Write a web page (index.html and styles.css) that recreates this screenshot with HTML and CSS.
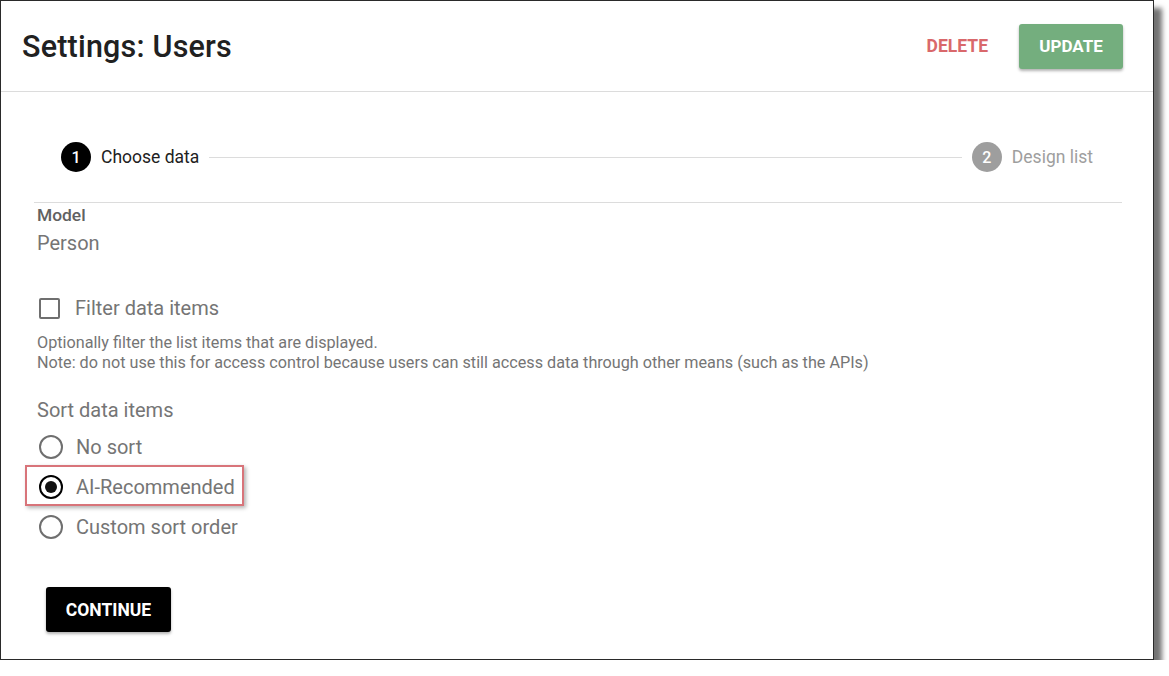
FILE: index.html
```html
<!DOCTYPE html>
<html lang="en">
<head>
<meta charset="UTF-8">
<meta name="viewport" content="width=device-width, initial-scale=1.0">
<title>Settings: Users</title>
<link rel="stylesheet" href="styles.css">
</head>
<body>

<div class="dialog">
  <div class="dialog-header">
    <h1 class="dialog-title">Settings: Users</h1>
    <div class="header-actions">
      <button class="btn-text delete-button">DELETE</button>
      <button class="btn update-button">UPDATE</button>
    </div>
  </div>

  <div class="dialog-body">
    <!-- stepper -->
    <div class="stepper">
      <div class="step active">
        <span class="step-num">1</span>
        <span class="step-label">Choose data</span>
      </div>
      <div class="step-line"></div>
      <div class="step">
        <span class="step-num">2</span>
        <span class="step-label">Design list</span>
      </div>
    </div>

    <div class="field">
      <div class="field-label">Model</div>
      <div class="field-value">Person</div>
    </div>

    <label class="option checkbox-option">
      <span class="checkbox"></span>
      <span class="option-label">Filter data items</span>
    </label>
    <div class="help-text">
      Optionally filter the list items that are displayed.<br>
      Note: do not use this for access control because users can still access data through other means (such as the APIs)
    </div>

    <div class="group-title">Sort data items</div>
    <div class="radio-group">
      <label class="option">
        <span class="radio"></span>
        <span class="option-label">No sort</span>
      </label>
      <label class="option highlight">
        <span class="radio checked"></span>
        <span class="option-label">AI-Recommended</span>
      </label>
      <label class="option">
        <span class="radio"></span>
        <span class="option-label">Custom sort order</span>
      </label>
    </div>

    <button class="btn continue-button">CONTINUE</button>
  </div>
</div>

</body>
</html>
```

FILE: styles.css
```css
body {
  margin: 0;
  font-family: 'Roboto', 'Liberation Sans', sans-serif;
  background-color: #fff;
}
.dialog {
  box-sizing: border-box;
  width: 1154px;
  height: 660px;
  background-color: #fff;
  border: 1px solid #2a2a2a;
  box-shadow: 8px 8px 5px rgba(0, 0, 0, 0.55);
}
.dialog-header {
  display: flex;
  align-items: center;
  justify-content: space-between;
  height: 90px;
  padding: 0 30px 0 21px;
  border-bottom: 1px solid #dcdcdc;
}
.dialog-title {
  margin: 0;
  font-size: 30.5px;
  font-weight: 500;
  color: #212121;
  letter-spacing: 0.2px;
}
.header-actions {
  display: flex;
  align-items: center;
  gap: 14px;
}
button {
  border: none;
  font-family: inherit;
  font-size: 17.5px;
  font-weight: 700;
  cursor: pointer;
}
.btn-text {
  background: none;
  padding: 0 17px;
  height: 45px;
}
.delete-button {
  color: #d9686b;
}
.btn {
  height: 45px;
  padding: 0;
  color: #fff;
  border-radius: 3px;
  box-shadow: 0 2px 3px rgba(0, 0, 0, 0.3);
}
.update-button {
  background-color: #74ae7e;
  width: 104px;
  font-size: 17px;
}
.dialog-body {
  padding: 20px 31px 0 33px;
}
.stepper {
  display: flex;
  align-items: center;
  height: 90px;
  padding: 0 29px 0 27px;
  border-bottom: 1px solid #dcdcdc;
}
.step {
  display: flex;
  align-items: center;
  gap: 10px;
  color: #9e9e9e;
  font-size: 17.5px;
}
.step-num {
  display: flex;
  align-items: center;
  justify-content: center;
  width: 30px;
  height: 30px;
  border-radius: 50%;
  background-color: #9e9e9e;
  color: #fff;
  font-size: 16px;
  font-weight: 500;
}
.step.active {
  color: #212121;
}
.step.active .step-num {
  background-color: #000;
}
.step-line {
  flex: 1;
  height: 1px;
  margin: 0 10px;
  background-color: #dcdcdc;
}
.field {
  padding: 0 0 0 3px;
}
.field-label {
  font-size: 17.4px;
  font-weight: 500;
  color: #616161;
  line-height: 24px;
}
.field-value {
  font-size: 20px;
  color: #757575;
  line-height: 32px;
}
.option {
  display: flex;
  align-items: center;
  gap: 13px;
  height: 40px;
  padding-left: 5px;
  color: #757575;
  font-size: 20px;
}
.checkbox-option {
  margin-top: 29px;
}
.checkbox {
  box-sizing: border-box;
  width: 21px;
  height: 21px;
  margin: 0 2px 0 0;
  border: 2px solid #6f6f6f;
  border-radius: 2px;
}
.help-text {
  margin: 5px 0 0 3px;
  font-size: 16.2px;
  line-height: 20px;
  color: #757575;
}
.group-title {
  margin: 23px 0 0 3px;
  font-size: 20px;
  line-height: 28px;
  color: #757575;
}
.radio-group {
  margin-top: 3px;
}
.radio {
  box-sizing: border-box;
  position: relative;
  width: 24px;
  height: 24px;
  border: 2px solid #6f6f6f;
  border-radius: 50%;
}
.radio.checked {
  border-color: #000;
}
.radio.checked::after {
  content: '';
  position: absolute;
  top: 4px;
  left: 4px;
  width: 12px;
  height: 12px;
  border-radius: 50%;
  background-color: #111;
}
.highlight {
  position: relative;
}
.highlight::before {
  content: '';
  position: absolute;
  left: -9px;
  top: -2px;
  width: 219px;
  height: 41px;
  box-sizing: border-box;
  border: 2px solid #d8747a;
  box-shadow: 2px 2px 4px rgba(0, 0, 0, 0.3);
}
.continue-button {
  margin: 40px 0 0 12px;
  width: 125px;
  background-color: #000;
}
```
